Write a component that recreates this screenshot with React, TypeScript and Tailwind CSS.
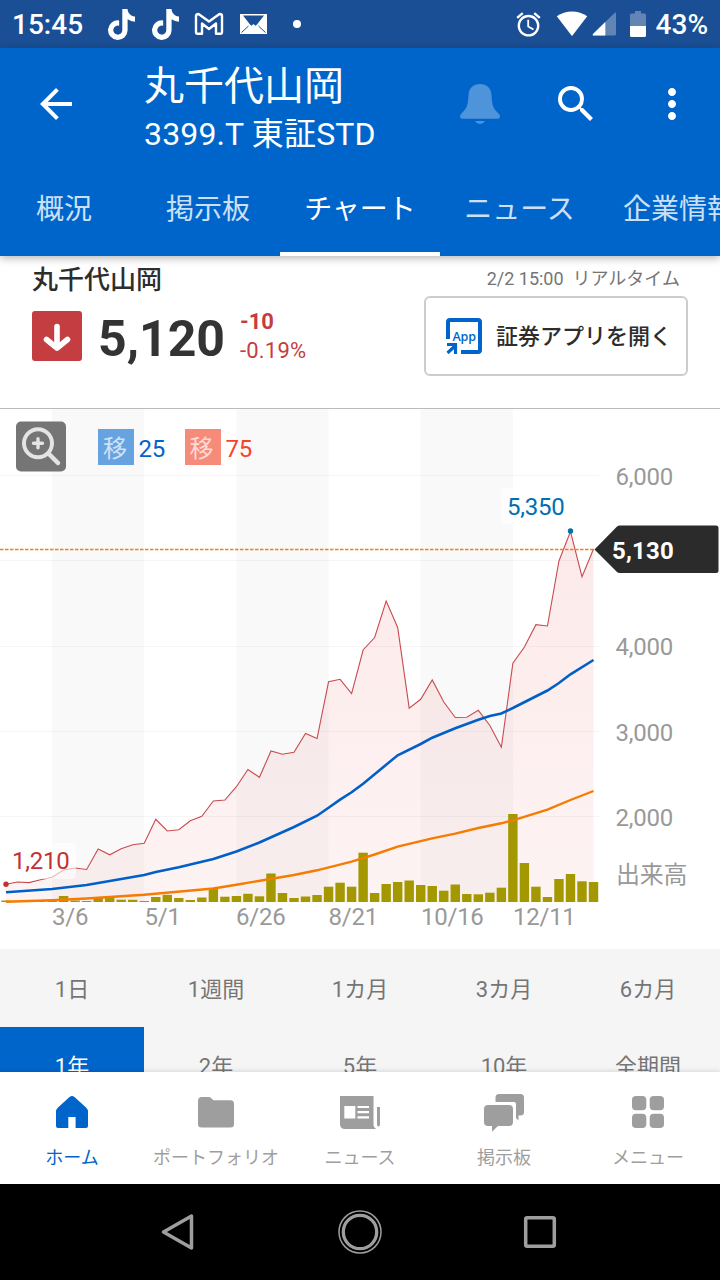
import type { ReactNode } from 'react';
import { FaTiktok } from 'react-icons/fa';
import { MdAccessAlarm, MdArrowBack, MdMoreVert, MdSearch } from 'react-icons/md';

const STEP = 11.52;
const BASE = 902;
const px = (i: number) => 6 + i * STEP;

const prices = [
  884.3, 882, 882.6, 879.7, 877.3, 870, 868, 869.5, 849, 854.8, 848.7, 844.7, 843.3, 819.3, 831, 829.7, 820.7,
  816.3, 801, 800, 786.7, 769.5, 777.3, 751, 754.3, 752.3, 733.5, 738.5, 681.8, 679.3, 693.6, 650, 637.5, 601,
  627.5, 708.2, 699.3, 680, 702, 717.5, 717.2, 710.3, 725.5, 747.3, 663.3, 647, 624.7, 626, 561, 531.5, 576.7, 549,
];

const volumes = [
  1.5, 1, 1.5, 1, 2, 6, 1.5, 1, 4, 4, 2.3, 2.2, 1, 5, 7.2, 4, 2, 4.5, 14, 5.3, 6, 8.2, 5.7, 28.5, 9, 4, 5.5, 7,
  15.3, 19.3, 15.3, 49.3, 9, 18, 20, 21.5, 17, 16, 11.3, 17.5, 8, 7.7, 9.3, 14.3, 88, 39, 15.3, 5, 23, 28, 20.7, 20,
];

// [index, y] pairs
const average25 = [
  [0, 892.3], [4, 889], [7, 885], [12, 875], [13, 872], [15, 867.3], [18, 859], [20, 851.5], [22, 842.5],
  [25, 827], [27, 815.7], [28, 807.7], [29, 799.7], [30, 792.3], [31, 783.7], [33, 764.7], [34, 755.3], [36, 744],
  [37, 737.7], [39, 728.3], [41, 719.7], [42, 716], [43, 713.5], [44, 708], [47, 690.5], [48, 683], [49, 674.3], [51, 660],
];
const average75 = [
  [0, 901.7], [4, 900.3], [7, 898.5], [12, 894.7], [18, 888.5], [20, 884.7], [25, 875], [27, 870.3], [30, 861.7],
  [32, 854.5], [34, 846.7], [37, 838.3], [39, 833.7], [41, 828], [43, 823.3], [44, 820.3], [47, 809.7], [49, 800], [51, 791],
];

const toPoints = (rows: number[][]) => rows.map(([i, y]) => `${px(i)},${y}`).join(' ');
const pricePoints = prices.map((y, i) => `${px(i)},${y}`).join(' ');

const tabs = [
  { label: '概況', width: 'w-36' },
  { label: '掲示板', width: 'w-36' },
  { label: 'チャート', width: 'w-40', active: true },
  { label: 'ニュース', width: 'w-[159px]' },
  { label: '企業情報', width: 'w-40' },
];

const periods = ['1日', '1週間', '1カ月', '3カ月', '6カ月', '1年', '2年', '5年', '10年', '全期間'];

function StatusBar() {
  return (
    <div className="flex h-12 shrink-0 items-center bg-[#1a4f95] pl-3 text-[28px] font-medium text-white">
      <span className="w-24 pt-0.5 leading-none">15:45</span>
      <FaTiktok className="h-[31px] w-[27px]" />
      <FaTiktok className="ml-[17px] h-[31px] w-[27px]" />
      <svg className="ml-[15px] h-6 w-[30px]" viewBox="0 0 30 24" fill="none" stroke="currentColor" strokeWidth="2.400" strokeLinejoin="round">
        <path d="M2 4 Q2 2 4.500 2 L15 9.500 L25.500 2 Q28 2 28 4 V20 Q28 21.800 26.500 21.800 H22 V11.500 L15 17 L8 11.500 V21.800 H3.500 Q2 21.800 2 20 Z" />
      </svg>
      <svg className="ml-4 h-5 w-[27px]" viewBox="0 0 27 20">
        <rect width="27" height="20" fill="#fff" />
        <path d="M3 1.500 H24 L17 10.500 L15.500 11.800 L13.500 10 L11.500 11.800 L10 10.500Z" fill="#1a4f95" />
        <path d="M1.500 18.500 L8.500 12 M25.500 18.500 L18.500 12" fill="none" stroke="#1a4f95" strokeWidth="1" />
      </svg>
      <span className="ml-[26px] size-2 rounded-full bg-white" />
      <div className="ml-auto flex h-full items-center pr-3">
        <MdAccessAlarm className="size-[29px]" />
        <svg className="ml-[13px] h-[26px] w-8" viewBox="0 0 32 26" fill="currentColor">
          <path d="M.8 5.2 Q7.5 .5 16 .5 T31.2 5.2 L16.5 24.5 Q16 25 15.5 24.5Z" />
        </svg>
        <svg className="ml-[4px] h-6 w-6" viewBox="0 0 24 24">
          <path d="M24 1.5 V22 Q24 23.5 22.5 23.5 H1.5 Q0 23.5 1 22 L22.5 1 Q24 0 24 1.5Z" fill="#6285b6" />
          <path d="M13.3 10 V23.5 H1.5 Q0 23.5 1 22Z" fill="#fff" />
        </svg>
        <svg className="ml-[14px] h-[26px] w-4" viewBox="0 0 16 26">
          <path d="M5 0 H11 V2.5 H14.5 Q16 2.5 16 4 V15 H0 V4 Q0 2.5 1.5 2.5 H5Z" fill="#6285b6" />
          <path d="M0 15 H16 V24.5 Q16 26 14.5 26 H1.5 Q0 26 0 24.5Z" fill="#fff" />
        </svg>
        <span className="ml-2.5 pt-0.5 leading-none">43%</span>
      </div>
    </div>
  );
}

function AppBar() {
  return (
    <header className="relative z-10 h-[208px] shrink-0 bg-[#0065cb] text-white shadow-[0_2px_8px_rgba(0,0,0,0.3)]">
      <div className="flex h-28 items-center pr-6 pl-8">
        <MdArrowBack className="size-12" />
        <div className="ml-16 flex-1 pt-3 whitespace-nowrap">
          <h1 className="text-[40px] leading-[48px]">丸千代山岡</h1>
          <p className="text-[32px] leading-[46px] tracking-[0.15px]">3399.T 東証STD</p>
        </div>
        <svg className="size-10" viewBox="0 0 40 40" fill="#4d94db">
          <path d="M20 0 C27 0 31 4 31.5 11 C32 23 34 25 39 30 Q40 31 40 32.5 Q40 34.7 37.5 34.7 H2.5 Q0 34.7 0 32.5 Q0 31 1 30 C6 25 8 23 8.500 11 C9 4 13 0 20 0Z" />
          <path d="M15 37 H25 Q23 40 20 40 T15 37Z" />
        </svg>
        <MdSearch className="ml-[52px] size-12" />
        <MdMoreVert className="ml-12 size-12" />
      </div>
      <nav className="flex h-24 overflow-hidden">
        {tabs.map((tab, i) => (
          <div
            key={tab.label}
            className={`flex shrink-0 items-center justify-center border-b-4 pt-2 text-[28px] leading-none ${tab.width} ${i === 0 ? '-ml-2' : ''} ${
              tab.active ? 'border-white text-white' : 'border-transparent text-[#cce0f5]'
            }`}
          >
            {tab.label}
          </div>
        ))}
      </nav>
    </header>
  );
}

function Quote() {
  return (
    <section className="flex h-[153px] shrink-0 justify-between border-b border-[#bbb] px-8 text-[#2d2d2d]">
      <div>
        <h2 className="mt-1.5 text-[26px] leading-9 font-medium">丸千代山岡</h2>
        <div className="mt-[9px] flex items-center">
          <svg className="size-[50px]" viewBox="0 0 50 50">
            <rect width="50" height="50" rx="3" fill="#c43d41" />
            <path d="M25 15.500 V37 M14.500 28.500 L25 37.200 L35.500 28.500" fill="none" stroke="#fff" strokeWidth="5.600" strokeLinecap="round" strokeLinejoin="round" />
          </svg>
          <span className="mt-[5px] ml-4 w-[142px] text-[50px] leading-[50px] font-bold text-[#333]">5,120</span>
          <div className="text-[22px] leading-[29px] text-[#c43d41]">
            <p className="font-bold">-10</p>
            <p className="tracking-[0.2px]">-0.19%</p>
          </div>
        </div>
      </div>
      <div className="flex flex-col items-end">
        <p className="mt-[10px] h-[30px] pr-2 text-[18px] leading-[26px] whitespace-pre text-[#757575]">2/2 15:00  リアルタイム</p>
        <button className="flex h-20 w-[264px] items-center rounded-md border-2 border-[#ccc] pl-5 text-[22px] font-medium">
          <svg className="size-9" viewBox="0 0 36 36" fill="none" stroke="#0065cb">
            <path d="M2 21 V4 Q2 2 4 2 H32 Q34 2 34 4 V32 Q34 34 32 34 H15" strokeWidth="4" />
            <path d="M1.500 35 L10 27 M1 26.500 H9.500 V36" strokeWidth="3.200" />
            <text x="6.500" y="22.500" fontSize="12.500" fontWeight="600" fill="#0065cb" stroke="none" textLength="23.500" fontFamily="Open Sans">App</text>
          </svg>
          <span className="ml-[14px] whitespace-nowrap">証券アプリを開く</span>
        </button>
      </div>
    </section>
  );
}

function Chart() {
  return (
    <svg className="block h-[540px] w-full shrink-0" viewBox="0 409 720 540" fontSize="24">
      <defs>
        <linearGradient id="area" x1="0" y1="531" x2="0" y2="902" gradientUnits="userSpaceOnUse">
          <stop offset="0" stopColor="#e83c3c" stopOpacity="0.11" />
          <stop offset="1" stopColor="#e83c3c" stopOpacity="0.06" />
        </linearGradient>
      </defs>

      {[52, 236.300, 420.700].map((x) => (
        <rect key={x} x={x} y="409" width="92.200" height="493" fill="#f9f9f9" />
      ))}
      {[475.500, 560.500, 646.500, 731.500, 816.500].map((y) => (
        <path key={y} d={`M0 ${y}H599`} stroke="#000" strokeOpacity="0.04" />
      ))}

      <polygon points={`6,${BASE} ${pricePoints} 593.5,${BASE}`} fill="url(#area)" />
      {volumes.map((v, i) => (
        <rect key={i} x={px(i) - 4.700} y={BASE - v} width="9.400" height={v} fill="#a39800" />
      ))}
      <polyline points={pricePoints} fill="none" stroke="#c94b4f" strokeWidth="1.100" />
      <polyline points={toPoints(average75)} fill="none" stroke="#f57c00" strokeWidth="2.400" />
      <polyline points={toPoints(average25)} fill="none" stroke="#0060c8" strokeWidth="2.600" />
      <path d="M0 549.500H600" stroke="#f08019" strokeWidth="1.300" strokeDasharray="3.500 1.500" />

      {/* high and low markers */}
      <rect x="501" y="488" width="69" height="36" rx="4" fill="#fff" fillOpacity="0.6" />
      <text x="507" y="515" fill="#0070b0" letterSpacing="-0.25">5,350</text>
      <circle cx="570.500" cy="531" r="2.700" fill="#0070b0" />
      <rect x="6" y="843" width="70" height="36" rx="4" fill="#fff" fillOpacity="0.6" />
      <text x="12" y="868.500" fill="#c43135" letterSpacing="-0.25">1,210</text>
      <circle cx="6" cy="884.300" r="2.700" fill="#c43135" />

      <path d="M594.500 549.500 L617 526.500 Q618 525.500 620 525.500 H716 Q718.500 525.500 718.500 528 V570.500 Q718.500 573 716 573 H620 Q618 573 617 572Z" fill="#2b2b2b" />
      <text x="612" y="559" fontWeight="700" fill="#fff" letterSpacing="0.2">5,130</text>

      <g fill="#999" letterSpacing="-0.25">
        <text x="615.500" y="484.500">6,000</text>
        <text x="615.500" y="655">4,000</text>
        <text x="615.500" y="740.500">3,000</text>
        <text x="615.500" y="825.500">2,000</text>
        <text x="616" y="883">出来高</text>
        <text x="52" y="925">3/6</text>
        <text x="144.500" y="925">5/1</text>
        <text x="236" y="925">6/26</text>
        <text x="328.500" y="925">8/21</text>
        <text x="421" y="925">10/16</text>
        <text x="513" y="925">12/11</text>
      </g>

      {/* zoom button */}
      <rect x="16" y="421.500" width="50" height="50" rx="5" fill="#757575" />
      <g fill="none" stroke="#e4e4e4" strokeLinecap="round">
        <circle cx="38" cy="443.300" r="14" strokeWidth="4" />
        <path d="M49 454 L58 463" strokeWidth="4.500" />
        <path d="M33.500 443.300 H42.500 M38 438.800 V447.800" strokeWidth="3.400" />
      </g>

      {/* moving average legend */}
      <rect x="98" y="429" width="36" height="36" fill="#66a3e0" />
      <text x="103" y="456.500" fill="#fff" fillOpacity="0.7">移</text>
      <text x="138.500" y="456.500" fill="#0065cb" letterSpacing="-0.25">25</text>
      <rect x="185" y="429" width="36" height="36" fill="#f78b79" />
      <text x="189.500" y="456.500" fill="#fff" fillOpacity="0.7">移</text>
      <text x="225.500" y="456.500" fill="#f4442a" letterSpacing="-0.25">75</text>
    </svg>
  );
}

function NavItem({ label, active, children }: { label: string; active?: boolean; children: ReactNode }) {
  return (
    <div className={`flex w-36 flex-col items-center pt-5 ${active ? 'text-[#0065cb]' : 'text-[#9e9e9e]'}`}>
      <svg className="h-10 w-12" viewBox="0 0 48 40" fill="currentColor">
        {children}
      </svg>
      <span className="mt-3.5 text-[18px] leading-6 whitespace-nowrap">{label}</span>
    </div>
  );
}

function BottomNav() {
  return (
    <nav className="relative z-10 flex h-28 shrink-0 bg-white shadow-[0_-1px_5px_rgba(0,0,0,0.12)]">
      <NavItem label="ホーム" active>
        <path d="M21.500 5 Q24 3 26.500 5 L38 15.500 Q40 17.500 40 19.500 V34 Q40 36 38 36 H27.600 V25 H20.300 V36 H10 Q8 36 8 34 V19.500 Q8 17.500 10 15.500Z" />
      </NavItem>
      <NavItem label="ポートフォリオ">
        <path d="M10 5 H17 Q18 5 19 6 L21.500 8.300 H38.500 Q42 8.300 42 12 V32 Q42 35.500 38.500 35.500 H9.500 Q6 35.500 6 32 V9 Q6 5 10 5Z" />
      </NavItem>
      <NavItem label="ニュース">
        <path d="M4 4 H37.500 V33 Q37.500 35.500 40 37 H9 Q4 37 4 32Z" />
        <path d="M41 15 H44 V32 Q44 34.500 42.500 34.500 T41 32Z" />
        <path d="M8.300 14 H19.300 V26.500 H8.300Z M21.500 14 H33 V16 H21.500Z M21.500 19 H33 V21.200 H21.500Z M21.500 24.200 H33 V26.500 H21.500Z" fill="#fff" />
      </NavItem>
      <NavItem label="掲示板">
        <path d="M19 2 H40.500 Q44 2 44 5.500 V20 Q44 23.500 40.500 23.500 H38.500 V28.500 L36 26 V12 Q36 10 34 10 H15.500 V5.500 Q15.500 2 19 2Z" />
        <path d="M8 13 H29 Q33 13 33 17 V30 Q33 34 29 34 H18 L12 39.700 V34 H8 Q4 34 4 30 V17 Q4 13 8 13Z" />
      </NavItem>
      <NavItem label="メニュー">
        <rect x="8" y="4" width="14.300" height="14.300" rx="4" />
        <rect x="25.700" y="4" width="14.300" height="14.300" rx="4" />
        <rect x="8" y="21.700" width="14.300" height="14.300" rx="4" />
        <rect x="25.700" y="21.700" width="14.300" height="14.300" rx="4" />
      </NavItem>
    </nav>
  );
}

function SystemNav() {
  return (
    <div className="flex h-24 shrink-0 items-center justify-center gap-[132px] bg-black text-[#9e9e9e]">
      <svg className="size-12" viewBox="0 0 48 48" fill="none" stroke="currentColor" strokeWidth="3.500" strokeLinejoin="round">
        <path d="M36 8 V40 L8 24Z" transform="translate(-.5 0)" />
      </svg>
      <svg className="size-12" viewBox="0 0 48 48" fill="none" stroke="currentColor">
        <circle cx="24" cy="24" r="21" strokeWidth="1.500" />
        <circle cx="24" cy="24" r="16.700" strokeWidth="3.300" />
      </svg>
      <svg className="size-12" viewBox="0 0 48 48" fill="none" stroke="currentColor" strokeWidth="3.500">
        <rect x="9.700" y="9.700" width="28.600" height="28.600" rx="1.500" />
      </svg>
    </div>
  );
}

export default function App() {
  return (
    <div lang="ja" className="flex h-[1280px] w-[720px] flex-col overflow-hidden bg-white font-['Roboto','Noto_Sans_CJK_JP',sans-serif]">
      <StatusBar />
      <AppBar />
      <main className="flex min-h-0 flex-1 flex-col overflow-hidden">
        <Quote />
        <Chart />
        <div className="grid shrink-0 grid-cols-5 bg-[#f5f5f5] text-[22px] text-[#757575]">
          {periods.map((period, i) => (
            <div
              key={period}
              className={`flex h-[78px] items-center justify-center leading-none ${i < 5 ? 'pt-[3px]' : 'pt-px'} ${
                period === '1年' ? 'bg-[#0065cb] text-white' : ''
              }`}
            >
              {period}
            </div>
          ))}
        </div>
      </main>
      <BottomNav />
      <SystemNav />
    </div>
  );
}
